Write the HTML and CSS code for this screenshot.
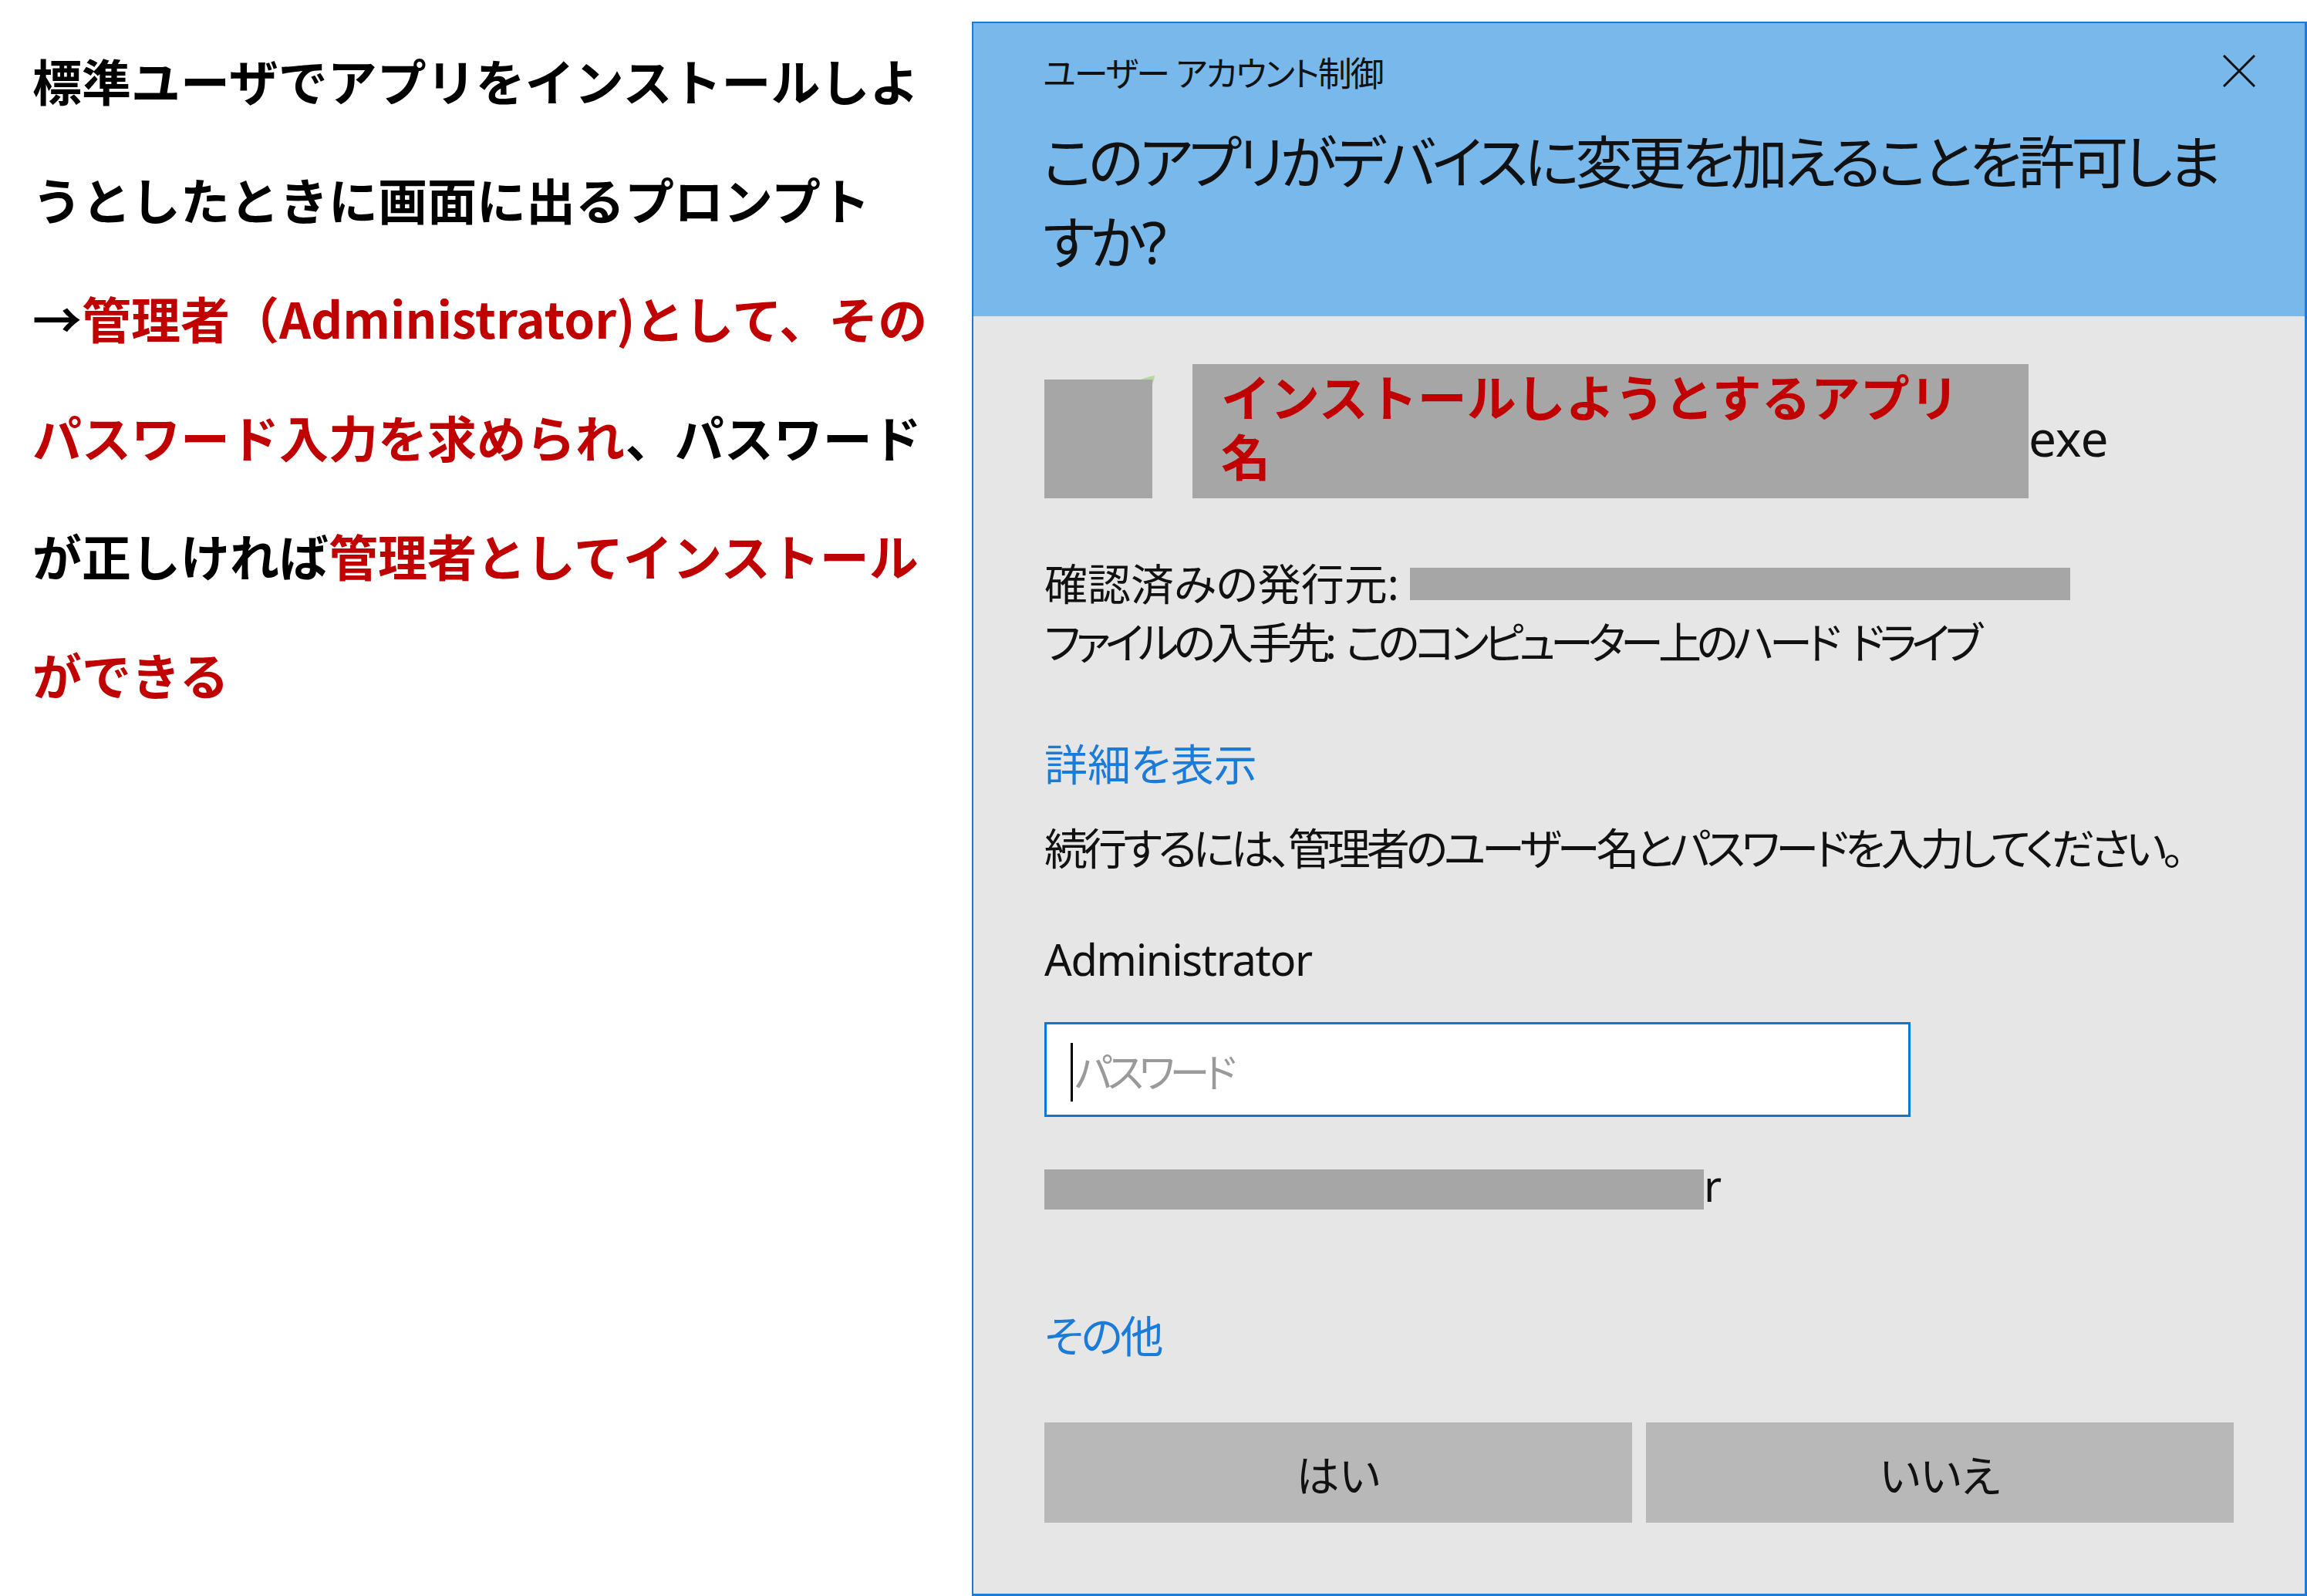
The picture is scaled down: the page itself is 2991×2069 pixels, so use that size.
FILE: index.html
```html
<!DOCTYPE html>
<html lang="ja">
<head>
    <meta charset="UTF-8">
    <meta name="viewport" content="width=device-width, initial-scale=1.0">
    <title>ユーザー アカウント制御</title>
    <link rel="stylesheet" href="styles.css">
</head>
<body>
    <div class="page">
        <div class="note">
            <p>標準ユーザでアプリをインストールしよ<br>うとしたときに画面に出るプロンプト<br>→<em>管理者（Administrator)として、その<br>パスワード入力を求められ</em>、パスワード<br>が正しければ<em>管理者としてインストール<br>ができる</em></p>
        </div>

        <div class="uac">
            <div class="uac-head">
                <div class="caption">ユーザー アカウント制御</div>
                <svg class="close" viewBox="0 0 42 42" width="42" height="42">
                    <path d="M1 1 L41 41 M41 1 L1 41" stroke="#111" stroke-width="3" fill="none"/>
                </svg>
                <div class="question">このアプリがデバイスに変更を加えることを許可しま<br>すか?</div>
            </div>

            <div class="uac-body">
                <div class="app-row">
                    <div class="app-icon">
                        <svg class="leaf" viewBox="0 0 50 40" width="50" height="40">
                            <path d="M4 38 C 6 20, 20 6, 46 2 C 44 20, 32 34, 4 38 Z" fill="#b7d99e"/>
                        </svg>
                        <div class="icon-mask"></div>
                    </div>
                    <div class="app-name">インストールしようとするアプリ<br>名</div>
                    <span class="app-ext">exe</span>
                </div>

                <div class="info">確認済みの発行元: <span class="redact"></span><br><span class="source">ファイルの入手先: このコンピューター上のハード ドライブ</span></div>

                <a class="link details">詳細を表示</a>
                <p class="prompt">続行するには、管理者のユーザー名とパスワードを入力してください。</p>

                <div class="account">Administrator</div>
                <div class="password">
                    <span class="caret"></span>
                    <span class="placeholder">パスワード</span>
                </div>
                <div class="domain">
                    <span class="redact-line"></span>
                    <span class="domain-tail">r</span>
                </div>

                <a class="link more">その他</a>

                <div class="buttons">
                    <button>はい</button>
                    <button>いいえ</button>
                </div>
            </div>
        </div>
    </div>
</body>
</html>
```

FILE: styles.css
```css
body {
    margin: 0;
    padding: 0;
    background-color: #ffffff;
    overflow: hidden;
}

.page {
    display: flex;
    align-items: flex-start;
}

/* left explanation */
.note {
    width: 1218px;
    padding: 26px 0 0 42px;
    flex: none;
}

.note p {
    margin: 0;
    font-family: "Noto Sans CJK JP", sans-serif;
    font-weight: 700;
    font-size: 64px;
    line-height: 154px;
    color: #000;
    white-space: nowrap;
}

.note em {
    font-style: normal;
    color: #c00000;
}

/* UAC dialog */
.uac {
    width: 1731px;
    height: 2041px;
    margin-top: 28px;
    box-sizing: border-box;
    border: 2px solid #1f78d1;
    border-right-width: 3px;
    border-bottom-width: 3px;
    background-color: #e6e6e6;
    display: flex;
    flex-direction: column;
    font-family: "Noto Sans", "Noto Sans CJK JP", sans-serif;
    font-feature-settings: "palt";
    color: #111;
}

.uac-head {
    position: relative;
    background-color: #78b8eb;
    padding: 35px 90px 44px 90px;
}

.caption {
    font-size: 44px;
    line-height: 60px;
    letter-spacing: -2px;
}

.close {
    position: absolute;
    top: 41px;
    right: 64px;
}

.question {
    margin-top: 33px;
    font-size: 74px;
    line-height: 104px;
    letter-spacing: -5px;
    white-space: nowrap;
}

.uac-body {
    flex: 1;
    padding: 0 92px;
    font-size: 56px;
    line-height: 76px;
}

.app-row {
    display: flex;
    align-items: flex-start;
    margin-top: 62px;
    height: 174px;
}

.app-icon {
    position: relative;
    width: 140px;
    height: 154px;
    margin-top: 20px;
    margin-right: 52px;
    flex: none;
}

.leaf {
    position: absolute;
    left: 97px;
    top: -7px;
}

.icon-mask {
    position: relative;
    width: 140px;
    height: 154px;
    background-color: #a6a6a6;
}

.app-name {
    width: 1084px;
    height: 174px;
    box-sizing: border-box;
    padding: 8px 0 0 37px;
    background-color: #a6a6a6;
    font-family: "Liberation Sans", "Noto Sans CJK JP", sans-serif;
    font-feature-settings: normal;
    font-weight: 700;
    font-size: 64px;
    line-height: 77px;
    color: #c00000;
    flex: none;
}

.app-ext {
    margin-top: 64px;
    font-size: 64px;
    line-height: 64px;
}

.info {
    margin-top: 72px;
    white-space: nowrap;
}

.redact {
    display: inline-block;
    width: 856px;
    height: 42px;
    background-color: #a6a6a6;
    vertical-align: baseline;
}

.source {
    letter-spacing: -6.5px;
    word-spacing: 10px;
}

.link {
    display: block;
    color: #1a7bd8;
    cursor: pointer;
}

.details {
    margin-top: 82px;
}

.prompt {
    margin: 33px 0 0 0;
    letter-spacing: -5px;
    white-space: nowrap;
}

.account {
    margin-top: 68px;
    letter-spacing: -1.3px;
}

.password {
    display: flex;
    align-items: center;
    width: 1123px;
    height: 123px;
    box-sizing: border-box;
    margin-top: 44px;
    padding: 7px 0 0 31px;
    border: 3px solid #0a78d7;
    background-color: #ffffff;
}

.caret {
    width: 3px;
    height: 76px;
    margin-right: 2px;
    background-color: #000;
}

.placeholder {
    font-size: 52px;
    letter-spacing: -6px;
    color: #9a9a9a;
}

.domain {
    display: flex;
    align-items: flex-start;
    margin-top: 68px;
}

.redact-line {
    width: 855px;
    height: 52px;
    background-color: #a6a6a6;
}

.domain-tail {
    line-height: 40px;
}

.more {
    margin-top: 125px;
    letter-spacing: -3px;
}

.buttons {
    display: grid;
    grid-template-columns: 1fr 1fr;
    gap: 18px;
    margin-top: 75px;
}

.buttons button {
    height: 130px;
    border: none;
    background-color: #b8b8b8;
    font-family: inherit;
    font-feature-settings: "palt";
    font-size: 56px;
    color: #111;
    padding: 0;
}
```
